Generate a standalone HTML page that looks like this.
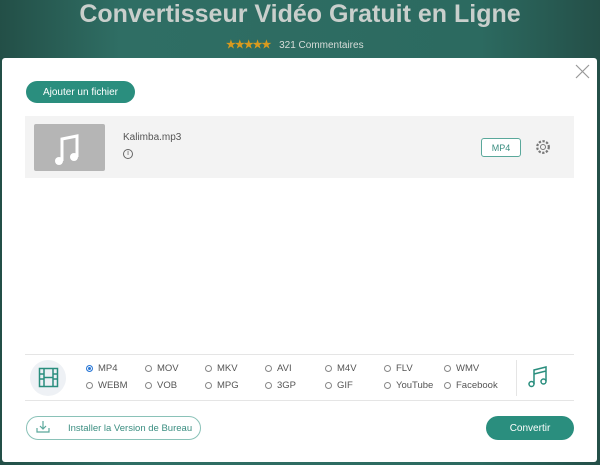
<!DOCTYPE html>
<html><head><meta charset="utf-8"><style>
*{margin:0;padding:0;box-sizing:border-box}
body{width:600px;height:465px;overflow:hidden;position:relative;font-family:"Liberation Sans",sans-serif;background:linear-gradient(90deg,#234f47,#2f6e64 20%,#2c6a60 80%,#244f48)}
.title{position:absolute;top:0;left:0;width:600px;text-align:center;color:#c9cfcc;font-size:25px;font-weight:bold;line-height:28px}
.rate{position:absolute;top:38px;left:226px;font-size:10px;color:#d8ddda}
.rate b{color:#d99a1e;letter-spacing:-1px;font-size:11px;margin-right:6px}
.modal{position:absolute;left:2px;top:58px;width:595px;height:404px;background:#fff;border-radius:3px}
.btn{position:absolute;border-radius:12px;color:#fff;background:#2a8e7e;font-size:10px;display:flex;align-items:center;justify-content:center}
.row{position:absolute;left:25px;top:116px;width:549px;height:62px;background:#f3f3f3}
.thumb{position:absolute;left:9px;top:8px;width:71px;height:47px;background:#b5b5b5;border-radius:2px}
.fmt{position:absolute;left:481px;top:138px;width:40px;height:19px;border:1px solid #5aa89b;border-radius:3px;color:#3a8d80;font-size:9px;display:flex;align-items:center;justify-content:center;background:#fff}
.bar{position:absolute;left:25px;top:354px;width:549px;height:47px;border-top:1px solid #e5e5e5;border-bottom:1px solid #e5e5e5}
.r{position:absolute;font-size:9.5px;color:#555}
.r i{display:inline-block;width:7px;height:7px;border:1px solid #888;border-radius:50%;margin-right:5px;vertical-align:-1px}
.r i.on{background:#2a78d6;border-color:#2a78d6;box-shadow:inset 0 0 0 1px #fff}
</style></head><body>
<div class="title">Convertisseur Vidéo Gratuit en Ligne</div>
<div class="rate"><b>★★★★★</b> 321 Commentaires</div>
<div class="modal"></div>
<svg style="position:absolute;left:575px;top:64px" width="15" height="15" viewBox="0 0 15 15" stroke="#999" stroke-width="1.2"><path d="M1 1L14 14M14 1L1 14"/></svg>
<div class="btn" style="left:26px;top:81px;width:109px;height:22px">Ajouter un fichier</div>
<div class="row"><div class="thumb"><svg width="71" height="47" viewBox="0 0 71 47"><path d="M28 37V15L43 12V33" stroke="#fff" stroke-width="3" fill="none"/><circle cx="25" cy="37" r="4" fill="#fff"/><circle cx="40" cy="33" r="4" fill="#fff"/></svg></div>
<div style="position:absolute;left:98px;top:16px;font-size:10px;color:#555">Kalimba.mp3</div>
<div style="position:absolute;left:98px;top:33px;width:10px;height:10px;border:1px solid #666;border-radius:50%;font-size:7px;text-align:center;line-height:8px;color:#555">i</div>
</div>
<div class="fmt">MP4</div>
<svg style="position:absolute;left:535px;top:139px" width="16" height="16" viewBox="0 0 16 16"><circle cx="8" cy="8" r="2.5" fill="none" stroke="#777"/><circle cx="8" cy="8" r="5.8" fill="none" stroke="#777" stroke-dasharray="2.3 1.5" stroke-width="2.2"/></svg>
<div class="bar"></div>
<div style="position:absolute;left:30px;top:360px;width:36px;height:36px;border-radius:50%;background:#eef1f5"></div>
<svg style="position:absolute;left:38px;top:367px" width="21" height="21" viewBox="0 0 21 21" fill="none" stroke="#2a8e7e" stroke-width="1.5"><rect x="1.5" y="1.5" width="18" height="18"/><path d="M6 1.5V19.5M15 1.5V19.5M1.5 7H6M1.5 12H6M15 7H19.5M15 12H19.5M6 10.5H15"/></svg>
<div style="position:absolute;left:516px;top:360px;width:1px;height:36px;background:#e5e5e5"></div>
<svg style="position:absolute;left:528px;top:366px" width="20" height="22" viewBox="0 0 20 22" fill="none" stroke="#2a8e7e" stroke-width="1.5"><path d="M6 18V4L18 1V15M6 8L18 5"/><circle cx="3.5" cy="18" r="2.5"/><circle cx="15.5" cy="15.5" r="2.5"/></svg>
<div class="r" style="left:86px;top:363px"><i class="on"></i>MP4</div>
<div class="r" style="left:145px;top:363px"><i></i>MOV</div>
<div class="r" style="left:205px;top:363px"><i></i>MKV</div>
<div class="r" style="left:265px;top:363px"><i></i>AVI</div>
<div class="r" style="left:325px;top:363px"><i></i>M4V</div>
<div class="r" style="left:384px;top:363px"><i></i>FLV</div>
<div class="r" style="left:444px;top:363px"><i></i>WMV</div>
<div class="r" style="left:86px;top:380px"><i></i>WEBM</div>
<div class="r" style="left:145px;top:380px"><i></i>VOB</div>
<div class="r" style="left:205px;top:380px"><i></i>MPG</div>
<div class="r" style="left:265px;top:380px"><i></i>3GP</div>
<div class="r" style="left:325px;top:380px"><i></i>GIF</div>
<div class="r" style="left:384px;top:380px"><i></i>YouTube</div>
<div class="r" style="left:444px;top:380px"><i></i>Facebook</div>
<div style="position:absolute;left:26px;top:416px;width:175px;height:24px;border:1px solid #8ac2b8;border-radius:12px;color:#3a8d80;font-size:9.5px;display:flex;align-items:center;padding-left:41px">Installer la Version de Bureau</div>
<svg style="position:absolute;left:36px;top:420px" width="14" height="14" viewBox="0 0 14 14" fill="none" stroke="#5aa89b" stroke-width="1.2"><path d="M7 1V9M4 6L7 9L10 6M1 8V12H13V8"/></svg>
<div class="btn" style="left:486px;top:416px;width:88px;height:24px">Convertir</div>
</body></html>
